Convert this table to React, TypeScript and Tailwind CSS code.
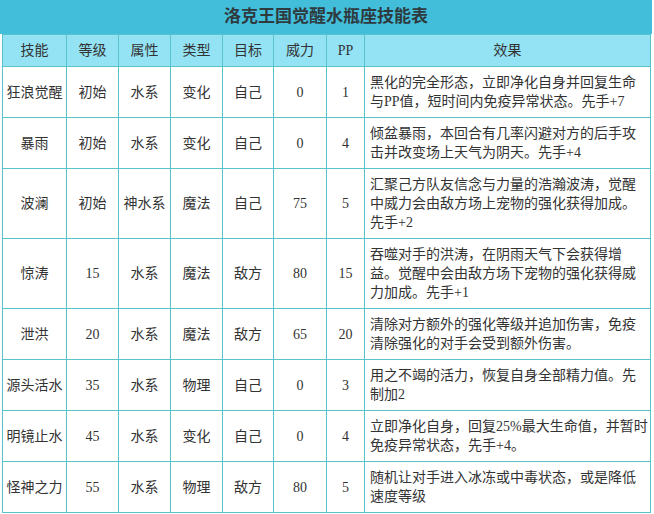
import React from 'react';

type Skill = {
  name: string;
  level: string;
  attr: string;
  kind: string;
  target: string;
  power: string;
  pp: string;
  effect: string;
};

const skills: Skill[] = [
  { name: '狂浪觉醒', level: '初始', attr: '水系', kind: '变化', target: '自己', power: '0', pp: '1', effect: '黑化的完全形态，立即净化自身并回复生命与PP值，短时间内免疫异常状态。先手+7' },
  { name: '暴雨', level: '初始', attr: '水系', kind: '变化', target: '自己', power: '0', pp: '4', effect: '倾盆暴雨，本回合有几率闪避对方的后手攻击并改变场上天气为阴天。先手+4' },
  { name: '波澜', level: '初始', attr: '神水系', kind: '魔法', target: '自己', power: '75', pp: '5', effect: '汇聚己方队友信念与力量的浩瀚波涛，觉醒中威力会由敌方场上宠物的强化获得加成。先手+2' },
  { name: '惊涛', level: '15', attr: '水系', kind: '魔法', target: '敌方', power: '80', pp: '15', effect: '吞噬对手的洪涛，在阴雨天气下会获得增益。觉醒中会由敌方场下宠物的强化获得威力加成。先手+1' },
  { name: '泄洪', level: '20', attr: '水系', kind: '魔法', target: '敌方', power: '65', pp: '20', effect: '清除对方额外的强化等级并追加伤害，免疫清除强化的对手会受到额外伤害。' },
  { name: '源头活水', level: '35', attr: '水系', kind: '物理', target: '自己', power: '0', pp: '3', effect: '用之不竭的活力，恢复自身全部精力值。先制加2' },
  { name: '明镜止水', level: '45', attr: '水系', kind: '变化', target: '自己', power: '0', pp: '4', effect: '立即净化自身，回复25%最大生命值，并暂时免疫异常状态，先手+4。' },
  { name: '怪神之力', level: '55', attr: '水系', kind: '物理', target: '敌方', power: '80', pp: '5', effect: '随机让对手进入冰冻或中毒状态，或是降低速度等级' },
];

const cell = 'border border-[#58c2cd] text-center align-middle py-[6px] leading-[19px]';

const App: React.FC = () => {
  return (
    <div className="w-[654px] h-[514px] bg-white text-[14px] text-[#333] font-['Liberation_Serif','Noto_Sans_CJK_SC',serif]">
      <div className="h-[34px] bg-[#42bedb] flex items-center justify-center text-[17px] font-bold text-[#2e3a3e] w-[652px]">
        洛克王国觉醒水瓶座技能表
      </div>
      <table className="ml-[2px] w-[649px] table-fixed border-collapse">
        <thead>
          <tr className="bg-[#93e3f5] h-[32px]">
            <th className={`${cell} font-normal w-[64px] py-0`}>技能</th>
            <th className={`${cell} font-normal w-[52px] py-0`}>等级</th>
            <th className={`${cell} font-normal w-[52px] py-0`}>属性</th>
            <th className={`${cell} font-normal w-[52px] py-0`}>类型</th>
            <th className={`${cell} font-normal w-[51px] py-0`}>目标</th>
            <th className={`${cell} font-normal w-[53px] py-0`}>威力</th>
            <th className={`${cell} font-normal w-[38px] py-0`}>PP</th>
            <th className={`${cell} font-normal py-0`}>效果</th>
          </tr>
        </thead>
        <tbody>
          {skills.map((s) => (
            <tr key={s.name}>
              <td className={`${cell} whitespace-nowrap`}>{s.name}</td>
              <td className={cell}>{s.level}</td>
              <td className={`${cell} whitespace-nowrap`}>{s.attr}</td>
              <td className={cell}>{s.kind}</td>
              <td className={cell}>{s.target}</td>
              <td className={cell}>{s.power}</td>
              <td className={cell}>{s.pp}</td>
              <td className="border border-[#58c2cd] text-left align-middle py-[6px] pl-[5px] pr-[2px] leading-[19px]">
                {s.effect}
              </td>
            </tr>
          ))}
        </tbody>
      </table>
    </div>
  );
};

export default App;
